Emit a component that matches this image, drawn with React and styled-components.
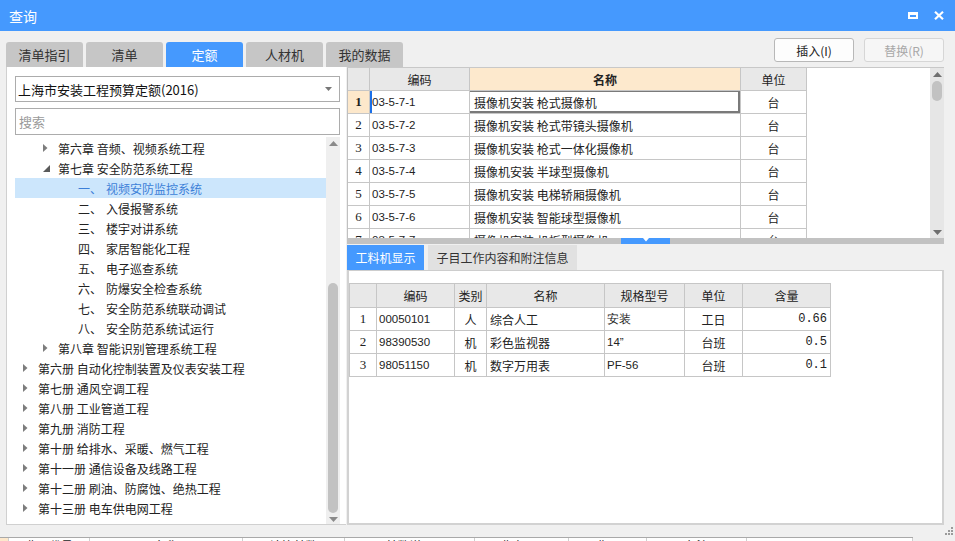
import React from "react";
import styled, { createGlobalStyle } from "styled-components";

const GlobalStyle = createGlobalStyle`
  html, body {
    margin: 0;
    padding: 0;
    background: #f0f0f0;
  }
  body {
    font-family: "Noto Sans CJK SC", "Noto Sans", "Liberation Sans", sans-serif;
    font-size: 12px;
    color: #222;
  }
`;

const tree = [
  { level: 1, arrow: "closed", text: "第六章 音频、视频系统工程" },
  { level: 1, arrow: "open", text: "第七章 安全防范系统工程" },
  { level: 2, num: "一、", text: "视频安防监控系统", selected: true },
  { level: 2, num: "二、", text: "入侵报警系统" },
  { level: 2, num: "三、", text: "楼宇对讲系统" },
  { level: 2, num: "四、", text: "家居智能化工程" },
  { level: 2, num: "五、", text: "电子巡查系统" },
  { level: 2, num: "六、", text: "防爆安全检查系统" },
  { level: 2, num: "七、", text: "安全防范系统联动调试" },
  { level: 2, num: "八、", text: "安全防范系统试运行" },
  { level: 1, arrow: "closed", text: "第八章 智能识别管理系统工程" },
  { level: 0, arrow: "closed", text: "第六册 自动化控制装置及仪表安装工程" },
  { level: 0, arrow: "closed", text: "第七册 通风空调工程" },
  { level: 0, arrow: "closed", text: "第八册 工业管道工程" },
  { level: 0, arrow: "closed", text: "第九册 消防工程" },
  { level: 0, arrow: "closed", text: "第十册 给排水、采暖、燃气工程" },
  { level: 0, arrow: "closed", text: "第十一册 通信设备及线路工程" },
  { level: 0, arrow: "closed", text: "第十二册 刷油、防腐蚀、绝热工程" },
  { level: 0, arrow: "closed", text: "第十三册 电车供电网工程" },
];

const quotas = [
  ["03-5-7-1", "摄像机安装 枪式摄像机"],
  ["03-5-7-2", "摄像机安装 枪式带镜头摄像机"],
  ["03-5-7-3", "摄像机安装 枪式一体化摄像机"],
  ["03-5-7-4", "摄像机安装 半球型摄像机"],
  ["03-5-7-5", "摄像机安装 电梯轿厢摄像机"],
  ["03-5-7-6", "摄像机安装 智能球型摄像机"],
  ["03-5-7-7", "摄像机安装 机板型摄像机"],
];

const resources = [
  ["1", "00050101", "人", "综合人工", "安装", "工日", "0.66"],
  ["2", "98390530", "机", "彩色监视器", "14”", "台班", "0.5"],
  ["3", "98051150", "机", "数字万用表", "PF-56", "台班", "0.1"],
];

const UPPER_COLS = "22px 100px 271px 66px";
const LOWER_COLS = "27px 78px 32px 118px 80px 58px 88px";

const Window = styled.div`
  width: 955px;
  height: 541px;
  display: flex;
  flex-direction: column;
  background: #f0f0f0;
  overflow: hidden;
`;

const TitleBar = styled.div`
  height: 31px;
  flex: none;
  background: #4599fe;
  color: #fff;
  display: flex;
  align-items: center;
  justify-content: space-between;
  padding: 0 11px 0 9px;
  font-size: 14px;
`;

const TitleIcons = styled.div`
  display: flex;
  align-items: center;
  gap: 16px;
`;

const TopRow = styled.div`
  height: 36px;
  flex: none;
  display: flex;
  justify-content: space-between;
  align-items: flex-start;
  padding: 0 11px 0 6px;
`;

const Tabs = styled.div`
  display: flex;
  gap: 3px;
  margin-top: 11px;
`;

const Tab = styled.div`
  width: 77px;
  height: 25px;
  border-radius: 3px 3px 0 0;
  background: ${(p) => (p.$active ? "#4599fe" : "#c6c6c6")};
  color: ${(p) => (p.$active ? "#fff" : "#333")};
  font-size: 13px;
  display: flex;
  align-items: center;
  justify-content: center;
`;

const Buttons = styled.div`
  display: flex;
  gap: 10px;
  margin-top: 7px;
`;

const Button = styled.div`
  width: 78px;
  height: 22px;
  border: 1px solid ${(p) => (p.$disabled ? "#d6d6d6" : "#b8b8b8")};
  border-radius: 3px;
  background: ${(p) => (p.$disabled ? "#f6f6f6" : "#fdfdfd")};
  color: ${(p) => (p.$disabled ? "#a8a8a8" : "#222")};
  display: flex;
  align-items: center;
  justify-content: center;
`;

const Main = styled.div`
  height: 458px;
  flex: none;
  display: flex;
  gap: 1px;
  padding: 0 11px 0 6px;
`;

const LeftPanel = styled.div`
  width: 340px;
  box-sizing: border-box;
  background: #fff;
  border-left: 1px solid #d0d0d0;
  border-bottom: 1px solid #d0d0d0;
  padding: 9px 6px 0 8px;
  display: flex;
  flex-direction: column;
`;

const Select = styled.div`
  height: 26px;
  box-sizing: border-box;
  border: 1px solid #acacac;
  display: flex;
  align-items: center;
  justify-content: space-between;
  padding: 0 7px 0 2px;
  font-size: 13px;
  color: #111;
`;

const Search = styled.div`
  height: 27px;
  margin-top: 6px;
  box-sizing: border-box;
  border: 1px solid #acacac;
  display: flex;
  align-items: center;
  padding-left: 3px;
  font-size: 13px;
  color: #9a9a9a;
`;

const TreeArea = styled.div`
  flex: 1;
  margin-top: 2px;
  display: flex;
  min-height: 0;
`;

const TreeList = styled.div`
  flex: 1;
  padding-top: 1px;
`;

const TreeRow = styled.div`
  height: 20px;
  display: flex;
  align-items: center;
  padding-left: ${(p) => 8 + p.$level * 20}px;
  background: ${(p) => (p.$selected ? "#cce6fc" : "transparent")};
  color: ${(p) => (p.$selected ? "#3c7fd8" : "#222")};
  white-space: nowrap;
`;

const ArrowBox = styled.span`
  width: 15px;
  flex: none;
  display: flex;
  align-items: center;
`;

const TreeNum = styled.span`
  width: 28px;
  flex: none;
`;

const ScrollBar = styled.div`
  width: 14px;
  flex: none;
  background: ${(p) => p.$bg || "#efefef"};
  display: flex;
  flex-direction: column;
  align-items: center;
`;

const ScrollArrow = styled.div`
  height: 12px;
  flex: none;
  display: flex;
  align-items: center;
  justify-content: center;
`;

const ScrollTrack = styled.div`
  flex: 1;
  width: 100%;
  display: flex;
  justify-content: center;
`;

const Thumb = styled.div`
  width: 10px;
  height: ${(p) => p.$h}px;
  margin-top: ${(p) => p.$top}px;
  border-radius: 5px;
  background: #c2c2c2;
`;

const RightArea = styled.div`
  width: 597px;
  display: flex;
  flex-direction: column;
`;

const UpperGrid = styled.div`
  height: 171px;
  flex: none;
  display: flex;
  border-top: 1px solid #c8c8c8;
  box-sizing: border-box;
`;

const GridBody = styled.div`
  flex: 1;
  background: #fff;
  border-left: 1px solid #c0c0c0;
  overflow: hidden;
`;

const Row = styled.div`
  display: grid;
  grid-template-columns: ${(p) => p.$cols};
  height: ${(p) => p.$h || 23}px;
`;

const Cell = styled.div`
  box-sizing: border-box;
  border-right: 1px solid #c6c6c6;
  border-bottom: 1px solid #c6c6c6;
  display: flex;
  align-items: center;
  justify-content: ${(p) =>
    p.$align === "center" ? "center" : p.$align === "right" ? "flex-end" : "flex-start"};
  padding: 0 ${(p) => (p.$align === "right" ? 3 : 0)}px 0 ${(p) => (p.$align === "left" ? p.$pad || 2 : 0)}px;
  background: ${(p) => p.$bg || "#fff"};
  font-weight: ${(p) => (p.$bold ? 700 : 400)};
  white-space: nowrap;
  overflow: hidden;
  ${(p) => (p.$focus ? "box-shadow: inset -2px -2px 0 #7a7a7a, inset 0 1px 0 #7a7a7a;" : "")}
  ${(p) => (p.$caret ? "box-shadow: inset 2px 0 0 #1a6fe8;" : "")}
`;

const Code = styled.span`
  font-family: "Liberation Sans", sans-serif;
  font-size: 11.5px;
`;

const RowNum = styled.span`
  font-family: "Liberation Serif", serif;
  font-size: 13px;
  font-weight: ${(p) => (p.$bold ? 700 : 400)};
`;

const Amount = styled.span`
  font-family: "Liberation Mono", monospace;
  font-size: 12px;
`;

const Splitter = styled.div`
  height: 6px;
  flex: none;
  background: #c2c2c2;
  display: flex;
  justify-content: center;
`;

const SplitHandle = styled.div`
  width: 49px;
  background: #4599fe;
  display: flex;
  justify-content: center;
  align-items: flex-start;
`;

const SubTabs = styled.div`
  display: flex;
  gap: 4px;
  margin-top: 1px;
  height: 25px;
  flex: none;
`;

const SubTab = styled.div`
  width: ${(p) => p.$w}px;
  flex: none;
  background: ${(p) => (p.$active ? "#4599fe" : "#e1e1e1")};
  color: ${(p) => (p.$active ? "#fff" : "#333")};
  display: flex;
  align-items: center;
  justify-content: center;
  font-size: 12px;
  white-space: nowrap;
`;

const SubPanel = styled.div`
  flex: 1;
  background: #fff;
  border: 2px solid #d2d2d2;
  border-top: 1px solid #cdcdcd;
  padding-top: 12px;
`;

const LowerTable = styled.div`
  width: 481px;
  border-top: 1px solid #c6c6c6;
  border-left: 1px solid #c6c6c6;
`;

const Footer = styled.div`
  height: 12px;
  flex: none;
  display: flex;
  justify-content: flex-end;
  align-items: flex-start;
  padding: 2px 2px 0 0;
  box-sizing: border-box;
`;

const Backdrop = styled.div`
  height: 4px;
  flex: none;
  display: flex;
  overflow: hidden;
`;

const BackdropTable = styled.div`
  width: 913px;
  display: grid;
  grid-template-columns: 9px 81px 153px 102px 130px 94px 78px 100px 166px;
  border-top: 1px solid #a9a9a9;
  background: #fff;
`;

const BackdropCell = styled.div`
  border-right: 1px solid #cfcfcf;
  background: ${(p) => p.$bg || "#fff"};
  font-size: 12px;
  line-height: 12px;
  padding-top: 2px;
  text-align: center;
  white-space: nowrap;
  overflow: hidden;
`;

const ClosedArrow = () => (
  <svg width="5" height="8" viewBox="0 0 5 8">
    <path d="M0 0 L4.5 4 L0 8 Z" fill="#7d7d7d" />
  </svg>
);

const OpenArrow = () => (
  <svg width="7" height="7" viewBox="0 0 7 7">
    <path d="M7 0 L7 7 L0 7 Z" fill="#5a5a5a" />
  </svg>
);

const UpTri = ({ color = "#6f6f6f" }) => (
  <svg width="9" height="5" viewBox="0 0 9 5">
    <path d="M0 5 L4.5 0 L9 5 Z" fill={color} />
  </svg>
);

const DownTri = ({ color = "#6f6f6f" }) => (
  <svg width="9" height="5" viewBox="0 0 9 5">
    <path d="M0 0 L9 0 L4.5 5 Z" fill={color} />
  </svg>
);

const App = () => (
  <>
    <GlobalStyle />
    <Window>
      <TitleBar>
        <span>查询</span>
        <TitleIcons>
          <svg width="10" height="7" viewBox="0 0 10 7">
            <path d="M0 0 H10 V7 H0 Z M2 3 V5 H8 V3 Z" fill="#fff" fillRule="evenodd" />
          </svg>
          <svg width="10" height="9" viewBox="0 0 10 9">
            <path d="M1 0.8 L9 8.2 M9 0.8 L1 8.2" stroke="#fff" strokeWidth="2.2" />
          </svg>
        </TitleIcons>
      </TitleBar>

      <TopRow>
        <Tabs>
          <Tab>清单指引</Tab>
          <Tab>清单</Tab>
          <Tab $active>定额</Tab>
          <Tab>人材机</Tab>
          <Tab>我的数据</Tab>
        </Tabs>
        <Buttons>
          <Button>插入(I)</Button>
          <Button $disabled>替换(R)</Button>
        </Buttons>
      </TopRow>

      <Main>
        <LeftPanel>
          <Select>
            <span>上海市安装工程预算定额(2016)</span>
            <svg width="7" height="4" viewBox="0 0 7 4">
              <path d="M0 0 H7 L3.5 4 Z" fill="#777" />
            </svg>
          </Select>
          <Search>搜索</Search>
          <TreeArea>
            <TreeList>
              {tree.map((item, i) => (
                <TreeRow key={i} $level={item.level} $selected={item.selected}>
                  <ArrowBox>
                    {item.arrow === "closed" && <ClosedArrow />}
                    {item.arrow === "open" && <OpenArrow />}
                  </ArrowBox>
                  {item.num && <TreeNum>{item.num}</TreeNum>}
                  <span>{item.text}</span>
                </TreeRow>
              ))}
            </TreeList>
            <ScrollBar>
              <ScrollArrow>
                <UpTri color="#8a8a8a" />
              </ScrollArrow>
              <ScrollTrack>
                <Thumb $top={134} $h={230} />
              </ScrollTrack>
              <ScrollArrow>
                <DownTri color="#8a8a8a" />
              </ScrollArrow>
            </ScrollBar>
          </TreeArea>
        </LeftPanel>

        <RightArea>
          <UpperGrid>
            <GridBody>
              <Row $cols={UPPER_COLS}>
                <Cell $bg="#e8e8e8" />
                <Cell $bg="#e8e8e8" $align="center">编码</Cell>
                <Cell $bg="#fde9cd" $align="center" $bold>名称</Cell>
                <Cell $bg="#e8e8e8" $align="center">单位</Cell>
              </Row>
              {quotas.map(([code, name], i) => (
                <Row key={code} $cols={UPPER_COLS}>
                  <Cell $align="center" $bg={i === 0 ? "#fde8cb" : "#fff"}>
                    <RowNum $bold={i === 0}>{i + 1}</RowNum>
                  </Cell>
                  <Cell $align="left" $pad={2} $caret={i === 0}>
                    <Code>{code}</Code>
                  </Cell>
                  <Cell $align="left" $pad={4} $focus={i === 0}>{name}</Cell>
                  <Cell $align="center">台</Cell>
                </Row>
              ))}
            </GridBody>
            <ScrollBar $bg="#e6e6e6">
              <ScrollArrow>
                <UpTri />
              </ScrollArrow>
              <ScrollTrack>
                <Thumb $top={1} $h={20} />
              </ScrollTrack>
              <ScrollArrow>
                <DownTri />
              </ScrollArrow>
            </ScrollBar>
          </UpperGrid>

          <Splitter>
            <SplitHandle>
              <svg width="6" height="4" viewBox="0 0 6 4">
                <path d="M0 0 H6 L3 3.5 Z" fill="#fff" />
              </svg>
            </SplitHandle>
          </Splitter>

          <SubTabs>
            <SubTab $active $w={77}>工料机显示</SubTab>
            <SubTab $w={149}>子目工作内容和附注信息</SubTab>
          </SubTabs>

          <SubPanel>
            <LowerTable>
              <Row $cols={LOWER_COLS} $h={24}>
                <Cell $bg="#e8e8e8" />
                <Cell $bg="#e8e8e8" $align="center">编码</Cell>
                <Cell $bg="#e8e8e8" $align="center">类别</Cell>
                <Cell $bg="#e8e8e8" $align="center">名称</Cell>
                <Cell $bg="#e8e8e8" $align="center">规格型号</Cell>
                <Cell $bg="#e8e8e8" $align="center">单位</Cell>
                <Cell $bg="#e8e8e8" $align="center">含量</Cell>
              </Row>
              {resources.map(([n, code, kind, name, spec, unit, qty]) => (
                <Row key={n} $cols={LOWER_COLS}>
                  <Cell $align="center">
                    <RowNum>{n}</RowNum>
                  </Cell>
                  <Cell $align="left" $pad={2}>
                    <Code>{code}</Code>
                  </Cell>
                  <Cell $align="center">{kind}</Cell>
                  <Cell $align="left" $pad={3}>{name}</Cell>
                  <Cell $align="left" $pad={2}>
                    <Code>{spec}</Code>
                  </Cell>
                  <Cell $align="center">{unit}</Cell>
                  <Cell $align="right">
                    <Amount>{qty}</Amount>
                  </Cell>
                </Row>
              ))}
            </LowerTable>
          </SubPanel>
        </RightArea>
      </Main>

      <Footer>
        <svg width="8" height="8" viewBox="0 0 8 8">
          <g fill="#9a9a9a">
            <rect x="6" y="0" width="2" height="2" />
            <rect x="3" y="3" width="2" height="2" />
            <rect x="6" y="3" width="2" height="2" />
            <rect x="0" y="6" width="2" height="2" />
            <rect x="3" y="6" width="2" height="2" />
            <rect x="6" y="6" width="2" height="2" />
          </g>
        </svg>
      </Footer>

      <Backdrop>
        <BackdropTable>
          <BackdropCell $bg="#fde8cb" />
          <BackdropCell>费用代号</BackdropCell>
          <BackdropCell>名称</BackdropCell>
          <BackdropCell>计算基数</BackdropCell>
          <BackdropCell>基数说明</BackdropCell>
          <BackdropCell>费率(%)</BackdropCell>
          <BackdropCell>费用</BackdropCell>
          <BackdropCell>备注</BackdropCell>
          <BackdropCell />
        </BackdropTable>
      </Backdrop>
    </Window>
  </>
);

export default App;
